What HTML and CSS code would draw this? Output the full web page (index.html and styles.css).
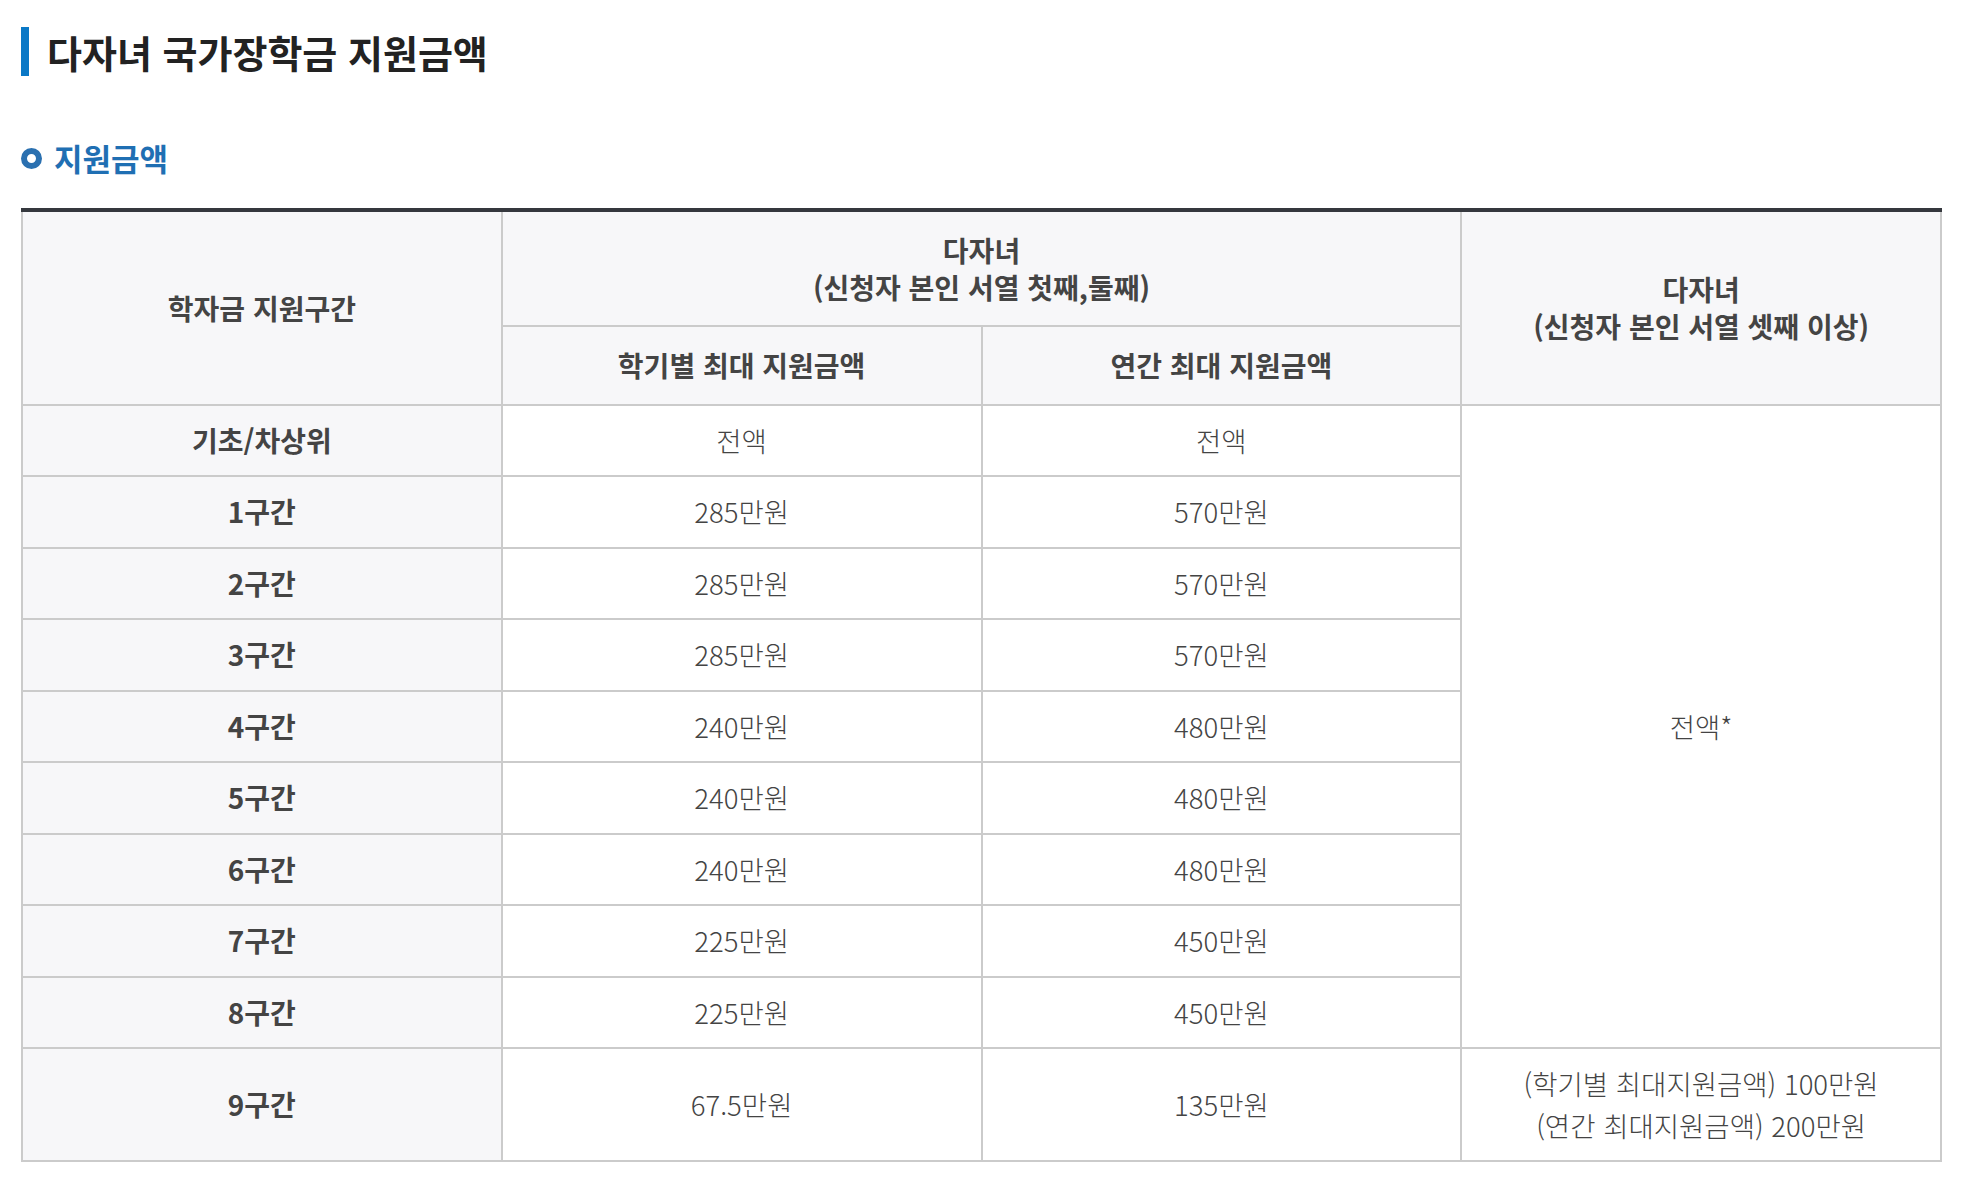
FILE: index.html
```html
<!DOCTYPE html>
<html lang="ko">
<head>
<meta charset="utf-8">
<title>다자녀 국가장학금 지원금액</title>
<link rel="stylesheet" href="styles.css">
</head>
<body>
<div class="page">
  <h2 class="title">다자녀 국가장학금 지원금액</h2>
  <h3 class="sub"><span class="ring"></span>지원금액</h3>
  <table class="amt">
    <colgroup><col><col><col><col></colgroup>
    <thead>
      <tr>
        <th rowspan="2">학자금 지원구간</th>
        <th colspan="2">다자녀<br>(신청자 본인 서열 첫째,둘째)</th>
        <th rowspan="2">다자녀<br>(신청자 본인 서열 셋째 이상)</th>
      </tr>
      <tr>
        <th>학기별 최대 지원금액</th>
        <th>연간 최대 지원금액</th>
      </tr>
    </thead>
    <tbody>
      <tr><th>기초/차상위</th><td>전액</td><td>전액</td><td rowspan="9">전액*</td></tr>
      <tr><th>1구간</th><td>285만원</td><td>570만원</td></tr>
      <tr><th>2구간</th><td>285만원</td><td>570만원</td></tr>
      <tr><th>3구간</th><td>285만원</td><td>570만원</td></tr>
      <tr><th>4구간</th><td>240만원</td><td>480만원</td></tr>
      <tr><th>5구간</th><td>240만원</td><td>480만원</td></tr>
      <tr><th>6구간</th><td>240만원</td><td>480만원</td></tr>
      <tr><th>7구간</th><td>225만원</td><td>450만원</td></tr>
      <tr><th>8구간</th><td>225만원</td><td>450만원</td></tr>
      <tr class="last"><th>9구간</th><td>67.5만원</td><td>135만원</td><td>(학기별 최대지원금액) 100만원<br>(연간 최대지원금액) 200만원</td></tr>
    </tbody>
  </table>
</div>
</body>
</html>
```

FILE: styles.css
```css
html, body {
  margin: 0;
  padding: 0;
  background: #ffffff;
}

body {
  font-family: "Noto Sans CJK KR", "Noto Sans", sans-serif;
  color: #444444;
}

.page {
  padding: 27px 30px 16px 21px;
}

.title {
  margin: 0;
  border-left: 8px solid #0a78c6;
  padding-left: 18px;
  font-size: 38px;
  line-height: 49px;
  font-weight: 700;
  color: #222222;
}

.sub {
  margin: 64px 0 0 0;
  display: flex;
  align-items: center;
  gap: 12px;
  font-size: 31px;
  line-height: 36px;
  font-weight: 700;
  color: #1f6fb3;
}

.ring {
  display: block;
  width: 21px;
  height: 21px;
  box-sizing: border-box;
  border: 6px solid #2a70b0;
  border-radius: 50%;
  flex: none;
}

.amt {
  margin-top: 32px;
  width: 1921px;
  border-collapse: collapse;
  table-layout: fixed;
  border-top: 4px solid #35383e;
}

.amt col {
  width: 25%;
}

.amt th,
.amt td {
  border: 2px solid #cbcbcb;
  padding: 14px 10px;
  font-size: 27.5px;
  line-height: 41.5px;
  text-align: center;
  vertical-align: middle;
  color: #444444;
}

.amt thead th {
  background: #f7f7f9;
  padding: 20px 10px;
  line-height: 36.5px;
  font-size: 28px;
  font-weight: 700;
}

.amt tbody th {
  background: #f7f7f9;
  font-size: 28px;
  font-weight: 700;
}

.amt tbody td {
  font-weight: 300;
  background: #ffffff;
}
```
